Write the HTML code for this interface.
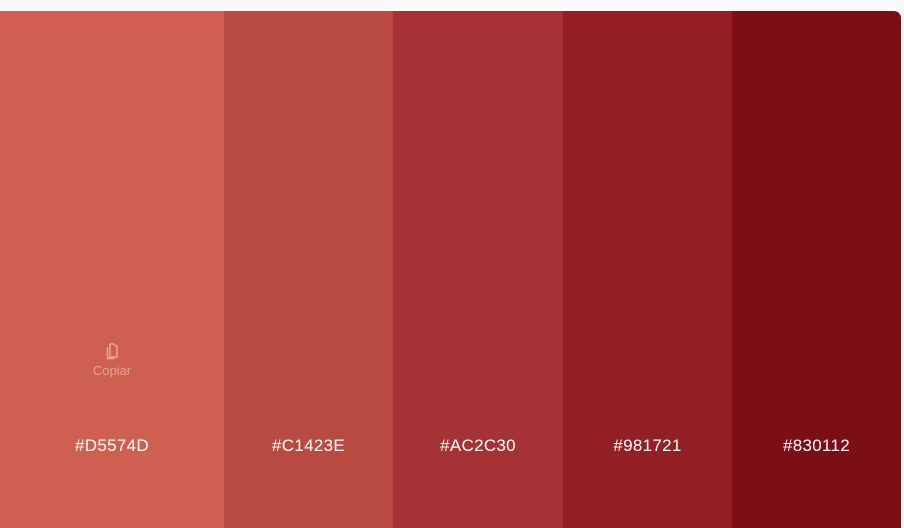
<!DOCTYPE html>
<html><head><style>
body{margin:0;width:904px;height:528px;background:#fafafc;overflow:hidden;font-family:"Liberation Sans",sans-serif}
.w{position:absolute;left:0;top:11px;width:901px;height:517px;display:flex;border-top-right-radius:7px;overflow:hidden}
.c{height:100%;position:relative;color:#fff;font-size:17px}
.c span{position:absolute;top:425px;left:0;right:0;text-align:center;letter-spacing:.3px}
.cp{position:absolute;top:331px;left:0;right:0;text-align:center;color:#e8a39a;font-size:13px}
</style></head><body>
<div class="w">
<div class="c" style="width:224px;background:#CF6051">
<div class="cp"><svg width="14" height="18" viewBox="0 0 14 18" style="display:block;margin:0 auto 3px"><path d="M5 2h4l3 3v10H5z M2.5 5v11.5h7" fill="none" stroke="#e8a39a" stroke-width="1.5"/></svg>Copiar</div>
<span>#D5574D</span></div>
<div class="c" style="width:169px;background:#B94A42"><span>#C1423E</span></div>
<div class="c" style="width:170px;background:#A53234"><span>#AC2C30</span></div>
<div class="c" style="width:169px;background:#922025"><span>#981721</span></div>
<div class="c" style="width:169px;background:#7C0F15"><span>#830112</span></div>
</div>
</body></html>
